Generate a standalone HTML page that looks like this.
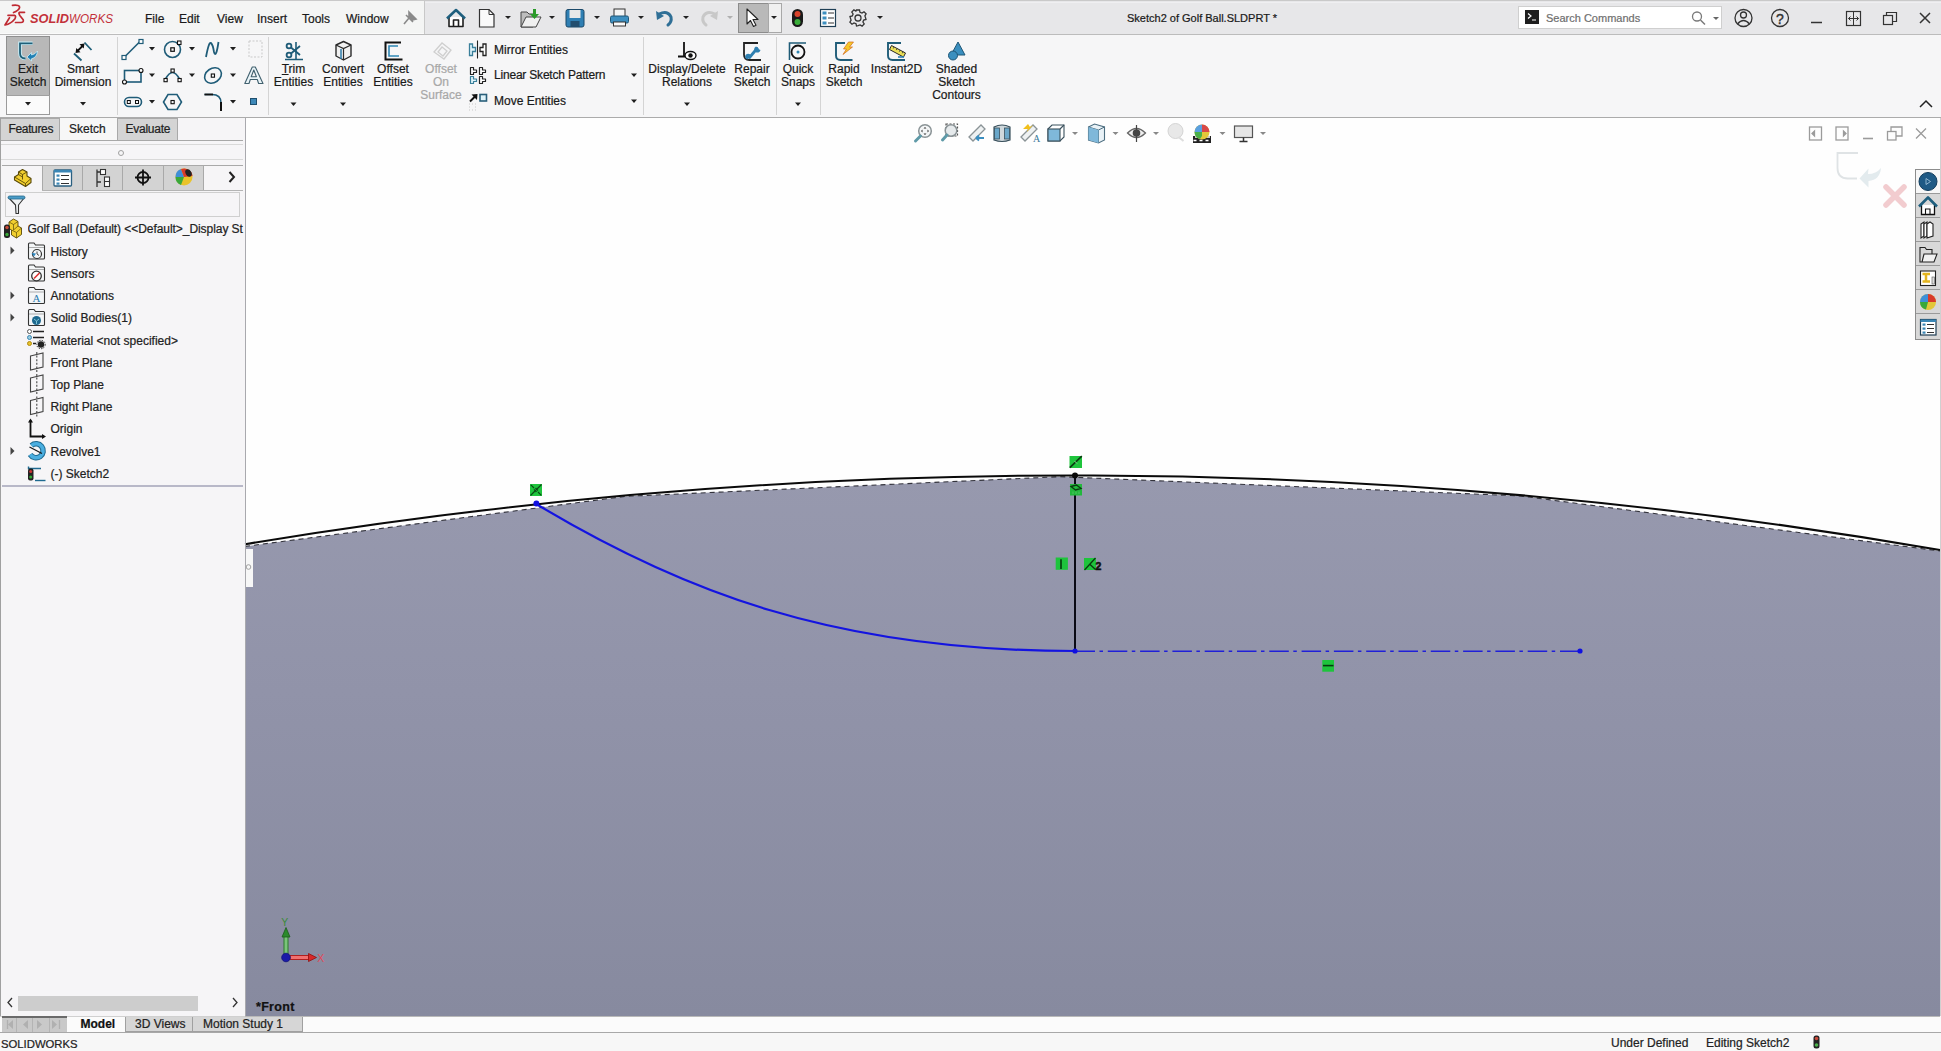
<!DOCTYPE html>
<html><head><meta charset="utf-8">
<style>
*{margin:0;padding:0;box-sizing:border-box}
html,body{width:1941px;height:1051px;overflow:hidden;background:#f4f4f4;font-family:"Liberation Sans",sans-serif;color:#1a1a1a}
.a{position:absolute}
.t{position:absolute;white-space:nowrap;font-size:12px;line-height:13px;-webkit-text-stroke:0.22px currentColor}
svg{position:absolute;overflow:visible}
.rl{position:absolute;top:63px;width:100px;margin-left:-50px;text-align:center;font-size:12px;line-height:13.2px;white-space:nowrap;color:#1a1a1a;-webkit-text-stroke:0.22px currentColor}
</style></head><body>
<!-- title bar -->
<div class="a" style="left:0;top:0;width:1941px;height:1px;background:#c9c9c9"></div>
<div class="a" style="left:0;top:1px;width:424px;height:33px;background:#f4f5f4"></div>
<div class="a" style="left:0;top:33px;width:424px;height:1px;background:#fafafa"></div>
<div class="a" style="left:424px;top:1px;width:1px;height:33px;background:#c8c8c8"></div>
<div class="a" style="left:425px;top:1px;width:1516px;height:33px;background:#e7e7e9"></div>
<div class="a" style="left:425px;top:2px;width:1516px;height:1px;background:#efeff1"></div>
<div class="a" style="left:0;top:34px;width:1941px;height:1px;background:#bcbcbc"></div>
<!-- title content -->
<svg class="a" style="left:0;top:0" width="1941" height="35">
<!-- 3DS logo -->
<g fill="none" stroke="#bf2a32" stroke-width="1.7" stroke-linecap="round" stroke-linejoin="round">
<path d="M12.5 5.3 Q20 4.5 19.6 7.5 Q18.8 10.5 13.5 12.5"/>
<path d="M8 15.3 L14.5 15.3 Q16.5 16 14.8 19 Q11 23.8 5 25 L9.5 17.8"/>
<path d="M24.5 12.3 L19.5 12.3 Q18.3 13 19.8 15.5 L23.2 19.8 Q24 22.5 21 22.5 L15.5 22.5"/>
</g>
<text x="30" y="23" font-family="Liberation Sans" font-size="12.5" font-weight="bold" font-style="italic" fill="#c3313a" textLength="39" lengthAdjust="spacingAndGlyphs">SOLID</text>
<text x="69" y="23" font-family="Liberation Sans" font-size="12.5" font-style="italic" fill="#c3313a" textLength="44" lengthAdjust="spacingAndGlyphs">WORKS</text>
<!-- pin -->
<path d="M404 24 L409 18 M406 15 L413 22 M409 12 L416 19 L412 20 L409 17 Z" stroke="#8a8a8a" stroke-width="1.6" fill="#8a8a8a"/>
<!-- home -->
<g stroke="#1e1e1e" stroke-width="1.6" fill="#fff" stroke-linejoin="round">
<path d="M449 17 L449 26.5 L463 26.5 L463 17" />
<path d="M453.5 26.5 L453.5 20 L458.5 20 L458.5 26.5" fill="none"/>
</g>
<path d="M447 18.5 L456 10 L465 18.5" stroke="#1e5f7e" stroke-width="2.6" fill="none" stroke-linejoin="round"/>
<!-- new doc -->
<path d="M479.5 9.5 L489 9.5 L494 14.5 L494 27 L479.5 27 Z" stroke="#333" stroke-width="1.2" fill="#fafafa"/>
<path d="M489 9.5 L489 14.5 L494 14.5" stroke="#333" stroke-width="1" fill="none"/>
<!-- open -->
<path d="M521 12 L527 12 L529 14 L533 14 L533 27 L521 27 Z" fill="#bdbdbd" stroke="#444" stroke-width="1"/>
<path d="M521 27 L526 17 L541 17 L536 27 Z" fill="#f0f0f0" stroke="#444" stroke-width="1"/>
<path d="M533 9 L536 9 L536 14 L539 14 L534.5 19 L530 14 L533 14 Z" fill="#2a9a2a"/>
<!-- save -->
<rect x="566" y="9.5" width="18" height="17.5" rx="2" fill="#2f7fb3" stroke="#1b4a6a" stroke-width="1"/>
<rect x="569.5" y="10" width="11" height="8" fill="#e8e8e8"/>
<rect x="570.5" y="21" width="9" height="6" fill="#234e6e"/>
<!-- print -->
<rect x="614" y="9" width="11" height="8" fill="#f5f5f5" stroke="#333" stroke-width="1"/>
<rect x="610.5" y="16" width="18" height="7" rx="1.5" fill="#3d8fc0" stroke="#1f5676" stroke-width="1"/>
<rect x="613.5" y="22" width="12" height="4" fill="#fafafa" stroke="#333" stroke-width="1"/>
<!-- undo -->
<path d="M659 14 Q668 10 671 17 Q672 22 668 25" stroke="#2f6f96" stroke-width="3" fill="none" stroke-linecap="round"/>
<path d="M656 11 L657 20 L664 16 Z" fill="#2f6f96"/>
<!-- redo (disabled) -->
<path d="M715 14 Q706 10 703 17 Q702 22 706 25" stroke="#c8c8c8" stroke-width="3" fill="none" stroke-linecap="round"/>
<path d="M718 11 L717 20 L710 16 Z" fill="#c8c8c8"/>
<!-- select box -->
<rect x="738.5" y="3.5" width="30" height="29" fill="#b9b9b9" stroke="#8c8c8c" stroke-width="1"/>
<rect x="768.5" y="3.5" width="13" height="29" fill="#f0f0f0" stroke="#a8a8a8" stroke-width="1"/>
<!-- dropdown arrows -->
<g fill="#222">
<path d="M505 16 L511 16 L508 19 Z"/><path d="M549 16 L555 16 L552 19 Z"/><path d="M594 16 L600 16 L597 19 Z"/><path d="M638 16 L644 16 L641 19 Z"/><path d="M683 16 L689 16 L686 19 Z"/><path d="M771 16 L777 16 L774 19 Z"/><path d="M877 16 L883 16 L880 19 Z"/>
</g>
<path d="M727 16 L733 16 L730 19 Z" fill="#b0b0b0"/>
<path d="M747 9 L747 24 L750.5 20.5 L753.5 26.5 L756 25.3 L753 19.5 L758 19.5 Z" fill="#fff" stroke="#222" stroke-width="1.1" stroke-linejoin="round"/>
<!-- traffic light -->
<rect x="792" y="9" width="11" height="18" rx="5.5" fill="#1a1a1a"/>
<circle cx="797.5" cy="14" r="3" fill="#d8432b"/><circle cx="797.5" cy="22" r="3" fill="#3aae3a"/>
<!-- list icon -->
<rect x="820.5" y="9.5" width="15" height="17" fill="#fff" stroke="#1f3f55" stroke-width="1.2"/>
<rect x="822.5" y="11.5" width="4" height="3" fill="#3d8fc0"/><rect x="822.5" y="16.5" width="4" height="3" fill="#3d8fc0"/><rect x="822.5" y="21.5" width="4" height="3" fill="#3d8fc0"/>
<path d="M828 13 H834 M828 18 H834 M828 23 H834" stroke="#333" stroke-width="1"/>
<!-- gear -->
<g transform="translate(858,18)" fill="none" stroke="#333" stroke-width="1.3">
<path d="M-1.5 -8 L1.5 -8 L2 -5.7 L4 -4.9 L6 -6.2 L8.1 -4.1 L6.9 -2.1 L7.6 -0.1 L8 1.5 L8 1.5 L5.7 2 L4.9 4 L6.2 6 L4.1 8.1 L2.1 6.9 L0.1 7.6 L-1.5 8 L-2 5.7 L-4 4.9 L-6 6.2 L-8.1 4.1 L-6.9 2.1 L-7.6 0.1 L-8 -1.5 L-5.7 -2 L-4.9 -4 L-6.2 -6 L-4.1 -8.1 L-2.1 -6.9 Z"/>
<circle r="3"/>
</g>
<!-- right side -->
<rect x="1518.5" y="6.5" width="203" height="22" fill="#fff" stroke="#cfcfcf" stroke-width="1"/>
<rect x="1525" y="10" width="14" height="14" fill="#1e1e1e"/>
<path d="M1528 13.5 L1531 16 L1528 18.5 M1532 20 H1536" stroke="#fff" stroke-width="1.2" fill="none"/>
<text x="1546" y="22" font-family="Liberation Sans" font-size="11" fill="#6e6e6e" stroke="#6e6e6e" stroke-width="0.2">Search Commands</text>
<circle cx="1697" cy="16.5" r="4.5" fill="none" stroke="#7a7a7a" stroke-width="1.3"/>
<path d="M1700.5 20 L1705 24.5" stroke="#7a7a7a" stroke-width="1.5"/>
<path d="M1713 17 L1719 17 L1716 20 Z" fill="#666"/>
<circle cx="1743.5" cy="18" r="8.5" fill="none" stroke="#333" stroke-width="1.3"/>
<circle cx="1743.5" cy="15" r="3" fill="none" stroke="#333" stroke-width="1.3"/>
<path d="M1737.5 24 Q1743.5 17 1749.5 24" fill="none" stroke="#333" stroke-width="1.3"/>
<circle cx="1780" cy="18" r="8.5" fill="none" stroke="#333" stroke-width="1.3"/>
<text x="1776" y="23.5" font-family="Liberation Sans" font-size="14" fill="#333" stroke="#333" stroke-width="0.4">?</text>
<path d="M1811 22.5 H1822" stroke="#333" stroke-width="1.5"/>
<rect x="1846.5" y="11.5" width="14" height="14" fill="none" stroke="#333" stroke-width="1.2"/>
<path d="M1853.5 12 V25 M1848.5 18.5 H1858.5 M1850.5 16.5 L1848.5 18.5 L1850.5 20.5 M1856.5 16.5 L1858.5 18.5 L1856.5 20.5" stroke="#333" stroke-width="1" fill="none"/>
<rect x="1883.5" y="15.5" width="9" height="9" fill="none" stroke="#333" stroke-width="1.2"/>
<path d="M1886.5 15.5 V12.5 H1896.5 V21.5 H1892.5" fill="none" stroke="#333" stroke-width="1.2"/>
<path d="M1920 13 L1930 23 M1930 13 L1920 23" stroke="#333" stroke-width="1.5"/>
</svg>
<div class="t" style="left:145px;top:13px;">File</div>
<div class="t" style="left:179px;top:13px;">Edit</div>
<div class="t" style="left:217px;top:13px;">View</div>
<div class="t" style="left:257px;top:13px;">Insert</div>
<div class="t" style="left:302px;top:13px;">Tools</div>
<div class="t" style="left:346px;top:13px;">Window</div>
<div class="t" style="left:1127px;top:12px;font-size:11px">Sketch2 of Golf Ball.SLDPRT *</div>
<!-- ribbon -->
<div class="a" style="left:0;top:35px;width:1941px;height:82px;background:#f6f6f7"></div>
<div class="a" style="left:0;top:117px;width:1941px;height:1px;background:#ababab"></div>
<!-- ribbon content -->
<div class="a" style="left:6px;top:36px;width:44px;height:59px;background:#b8b8b8;border:1px solid #8f8f8f;border-bottom:none"></div>
<div class="a" style="left:6px;top:95px;width:44px;height:20px;background:#fbfbfb;border:1px solid #9a9a9a;border-top:1px solid #a0a0a0"></div>
<div class="a" style="left:117px;top:37px;width:1px;height:78px;background:#d4d4d4"></div>
<div class="a" style="left:268px;top:37px;width:1px;height:78px;background:#d4d4d4"></div>
<div class="a" style="left:643px;top:37px;width:1px;height:78px;background:#d4d4d4"></div>
<div class="a" style="left:776px;top:37px;width:1px;height:78px;background:#d4d4d4"></div>
<div class="a" style="left:820px;top:37px;width:1px;height:78px;background:#d4d4d4"></div>
<div class="rl" style="left:28px;">Exit<br>Sketch</div>
<div class="rl" style="left:83px;">Smart<br>Dimension</div>
<div class="rl" style="left:293.5px;"><u style="text-decoration-thickness:1px;text-underline-offset:1px">T</u>rim<br>Entities</div>
<div class="rl" style="left:343px;">Convert<br>Entities</div>
<div class="rl" style="left:393px;">Offset<br>Entities</div>
<div class="rl" style="left:441px;color:#a8a8a8">Offset<br>On<br>Surface</div>
<div class="rl" style="left:687px;">Display/Delete<br>Relations</div>
<div class="rl" style="left:752px;">Repair<br>Sketch</div>
<div class="rl" style="left:798px;">Quick<br>Snaps</div>
<div class="rl" style="left:844px;">Rapid<br>Sketch</div>
<div class="rl" style="left:896.5px;">Instant2D</div>
<div class="rl" style="left:956.5px;">Shaded<br>Sketch<br>Contours</div>
<div class="t" style="left:494px;top:43.5px">Mirror Entities</div>
<div class="t" style="left:494px;top:69px;letter-spacing:-0.2px">Linear Sketch Pattern</div>
<div class="t" style="left:494px;top:95px">Move Entities</div>
<svg class="a" style="left:0;top:0" width="1941" height="118">
<g fill="#1e1e1e">
<path d="M25 102 L31 102 L28 105.5 Z"/><path d="M80 102 L86 102 L83 105.5 Z"/>
<path d="M149 47 L155 47 L152 50.5 Z"/><path d="M189 47 L195 47 L192 50.5 Z"/><path d="M230 47 L236 47 L233 50.5 Z"/>
<path d="M149 73.5 L155 73.5 L152 77 Z"/><path d="M189 73.5 L195 73.5 L192 77 Z"/><path d="M230 73.5 L236 73.5 L233 77 Z"/>
<path d="M149 100 L155 100 L152 103.5 Z"/><path d="M230 100 L236 100 L233 103.5 Z"/>
<path d="M290.5 102.5 L296.5 102.5 L293.5 106 Z"/><path d="M340 102.5 L346 102.5 L343 106 Z"/>
<path d="M631 73.5 L637 73.5 L634 77 Z"/><path d="M631 99.5 L637 99.5 L634 103 Z"/>
<path d="M684 102.5 L690 102.5 L687 106 Z"/><path d="M795 102.5 L801 102.5 L798 106 Z"/>
</g>
<path d="M1920 107 L1926 101 L1932 107" fill="none" stroke="#222" stroke-width="1.5"/>
<!-- exit sketch icon -->
<path d="M32.5 43.3 H20 V53 Q20 58.5 25.5 58.5" stroke="#c8eef8" stroke-width="3.6" fill="none"/>
<path d="M32.5 43.3 H20 V53 Q20 58.5 25.5 58.5" stroke="#1f5f78" stroke-width="1.8" fill="none"/>
<path d="M27 57 L31.5 52.5 L31.5 55 Q35 54.5 37.5 51 Q37 57.5 31.5 58.8 L31.5 61 Z" fill="#1f7fb4" stroke="#c8eef8" stroke-width="0.8"/>
<!-- smart dimension icon -->
<path d="M74 53.5 L81.5 60.5 M84.5 42.5 L91.5 50" stroke="#1f5f78" stroke-width="1.8"/>
<path d="M77.5 51 L83 45.5" stroke="#111" stroke-width="1.8"/>
<path d="M75.5 53 L76.3 48 L80.5 52.2 Z M84.5 43.5 L79.5 44.3 L83.7 48.5 Z" fill="#111"/>
<!-- line -->
<g fill="none" stroke="#1f5c78" stroke-width="1.6">
<path d="M124.5 57 L140 41.5"/><rect x="122" y="55.5" width="4" height="4" fill="#fff" stroke-width="1.2"/><rect x="139" y="39.5" width="4" height="4" fill="#fff" stroke-width="1.2"/>
<circle cx="172.5" cy="49.5" r="8"/><rect x="170.8" y="47.8" width="3.5" height="3.5" stroke="#111" stroke-width="1.2"/><rect x="177.5" y="41" width="3.5" height="3.5" fill="#fff" stroke="#111" stroke-width="1.1"/>
<path d="M206 57 Q209 41 211 43 Q213 45 214 52 Q216 59 218.5 42" stroke-width="1.8"/>
<rect x="124.5" y="70.5" width="16.5" height="11.5"/><circle cx="141" cy="70.5" r="2" fill="#fff" stroke="#111" stroke-width="1.1"/><circle cx="124.5" cy="82" r="2" fill="#fff" stroke="#111" stroke-width="1.1"/>
<path d="M165.5 79 Q172.5 66 179.5 79"/><rect x="164" y="78.5" width="3.2" height="3.2" fill="#fff" stroke="#111" stroke-width="1.1"/><rect x="178" y="78.5" width="3.2" height="3.2" fill="#fff" stroke="#111" stroke-width="1.1"/><rect x="171" y="69" width="3.2" height="3.2" fill="#fff" stroke="#111" stroke-width="1.1"/>
<ellipse cx="213" cy="75.5" rx="9" ry="7" transform="rotate(-35 213 75.5)"/><rect x="211.3" y="74" width="3.2" height="3.2" stroke="#111" stroke-width="1.1"/>
<rect x="124.5" y="97.5" width="17" height="9" rx="4.5"/><rect x="127.3" y="100.5" width="3" height="3" stroke="#111" stroke-width="1"/><rect x="135.5" y="100.5" width="3" height="3" stroke="#111" stroke-width="1"/>
<path d="M168 94.5 L177 94.5 L181.5 102 L177 109.5 L168 109.5 L163.5 102 Z"/><rect x="171" y="100.5" width="3.2" height="3.2" stroke="#111" stroke-width="1.1"/>
<path d="M204.5 94.5 L212 94.5 Q221 94.5 221 103" />
</g>
<path d="M221 102 L221 111" stroke="#111" stroke-width="2"/>
<path d="M204.5 94.5 L213 94.5" stroke="#111" stroke-width="1.8"/>
<rect x="249" y="41" width="13" height="16" fill="none" stroke="#c9c9c9" stroke-width="1" stroke-dasharray="2 1.5"/>
<path d="M244.8 83.5 L249 83.5 L250.3 79.5 L257.3 79.5 L258.6 83.5 L263 83.5 L255.3 67 L252.3 67 Z M251.2 76.8 L253.8 70 L256.4 76.8 Z" fill="#eaf4f8" fill-rule="evenodd" stroke="#40606e" stroke-width="1.1" stroke-linejoin="round"/>
<rect x="250.5" y="98.5" width="6" height="6" fill="#3d88b8" stroke="#1f4f6e" stroke-width="1"/>
<!-- trim -->
<g fill="none" stroke="#1f5c78" stroke-width="1.8">
<circle cx="289" cy="46" r="2.4"/><circle cx="289" cy="55" r="2.4"/>
<path d="M291 47.5 L300 55 M291 53.5 L300 46"/>
</g>
<path d="M296 42 L296 60 M285 59.5 L303 59.5" stroke="#1f5c78" stroke-width="1.6"/>
<!-- convert cube -->
<path d="M336 45 L343.5 41.5 L351 45 L351 56 L343.5 60 L336 56 Z" fill="#f1f1f1" stroke="#2a2a2a" stroke-width="1.4" stroke-linejoin="round"/>
<path d="M336 45 L343.5 48.5 L351 45 M343.5 48.5 L343.5 60" fill="none" stroke="#2a2a2a" stroke-width="1.2"/>
<path d="M341 49 L341 59" stroke="#2b7aa8" stroke-width="1.5"/>
<!-- offset -->
<path d="M401 42.5 L385.5 42.5 L385.5 59.5 L402.5 59.5" fill="none" stroke="#111" stroke-width="2"/>
<path d="M398 46 L389 46 L389 56 L399 56" fill="none" stroke="#2e86b4" stroke-width="1.6"/>
<!-- offset on surface disabled -->
<path d="M434 52 L442 43 L451 50 L444 59 Z M438 52 L442 47 L447 51 L443 56 Z" fill="none" stroke="#cfcfcf" stroke-width="1.3"/>
<!-- mirror / linear / move -->
<path d="M469.5 44 H472.5 V47.5 H475.5 V51.5 H472.5 V55.5 H469.5 Z" fill="#dff3f9" stroke="#3a7f9a" stroke-width="1.3"/>
<path d="M486 44 H483 V47.5 H480 V51.5 H483 V55.5 H486 Z" fill="#fff" stroke="#222" stroke-width="1.3"/>
<path d="M477.5 40.5 V58.5" stroke="#222" stroke-width="1.1"/>
<path d="M470.5 67.5 H473.5 V70.0 H476.5 V72.5 H473.5 V74.5 H470.5 Z" fill="#fff" stroke="#222" stroke-width="1.2" stroke-linejoin="round"/><path d="M479.5 67.5 H482.5 V70.0 H485.5 V72.5 H482.5 V74.5 H479.5 Z" fill="#fff" stroke="#222" stroke-width="1.2" stroke-linejoin="round"/><path d="M470.5 76.5 H473.5 V79.0 H476.5 V81.5 H473.5 V83.5 H470.5 Z" fill="#dff3f9" stroke="#3a7f9a" stroke-width="1.2" stroke-linejoin="round"/><path d="M479.5 76.5 H482.5 V79.0 H485.5 V81.5 H482.5 V83.5 H479.5 Z" fill="#fff" stroke="#222" stroke-width="1.2" stroke-linejoin="round"/>
<path d="M470 101.5 L476 95.5" stroke="#111" stroke-width="2"/>
<path d="M477.5 94 L471.5 94.5 L477 100 Z" fill="#111"/>
<rect x="480" y="94.5" width="6.5" height="6.5" fill="#dff3f9" stroke="#2a5f7a" stroke-width="1.6"/>
<g fill="#c8c8c8"><rect x="469" y="103.5" width="1" height="1"/><rect x="472" y="103.5" width="1" height="1"/><rect x="475" y="103.5" width="1" height="1"/><rect x="469" y="106.5" width="1" height="1"/><rect x="475" y="106.5" width="1" height="1"/><rect x="469" y="109.5" width="1" height="1"/><rect x="472" y="109.5" width="1" height="1"/><rect x="475" y="109.5" width="1" height="1"/></g>
<!-- display delete -->
<path d="M684 42 L684 56 M678 56.5 L690 56.5" stroke="#111" stroke-width="1.8"/>
<ellipse cx="690.5" cy="55.5" rx="5.5" ry="4" fill="#fff" stroke="#111" stroke-width="1.4"/>
<circle cx="690.5" cy="55.5" r="2.2" fill="#111"/>
<!-- repair -->
<path d="M758 43 H744 V54.5 Q744 60 749.5 60 H761" fill="none" stroke="#222" stroke-width="1.8"/>
<path d="M749.5 57.5 L757 48.5" stroke="#2e7fb0" stroke-width="2.8" stroke-linecap="round"/>
<path d="M756 46.5 A3.2 3.2 0 1 0 760.5 50 L758.8 49.2 L757.8 47.5 Z" fill="#2e7fb0"/>
<path d="M751 56 A3 3 0 1 0 747.2 59.5 L748.8 58.2 L749.8 56.8 Z" fill="#2e7fb0"/>
<!-- quick snaps -->
<path d="M789.5 60 L789.5 43 L806 43" fill="none" stroke="#1f5c78" stroke-width="1.6"/>
<circle cx="798" cy="52" r="6.5" fill="none" stroke="#111" stroke-width="1.8"/>
<circle cx="798" cy="52" r="1.5" fill="#2e86b4"/>
<!-- rapid sketch -->
<path d="M852.5 60 H840.5 Q836 60 836 55.5 V43 H845" fill="none" stroke="#1f5c78" stroke-width="1.9"/>
<path d="M848.5 42 L853.5 42 L849.5 47 L852.5 47 L843 54.5 L846.5 49 L843.5 49 Z" fill="#f4c82a" stroke="#d2691a" stroke-width="0.7" stroke-linejoin="round"/>
<!-- instant2D -->
<path d="M905 60 H892.5 Q888 60 888 55.5 V43 H901" fill="none" stroke="#1f5c78" stroke-width="1.9"/>
<path d="M891.5 45.5 L905.5 53 L903.5 57 L889.5 49.5 Z" fill="#ece058" stroke="#2a2a2a" stroke-width="1"/>
<path d="M894 47 L893.3 48.5 M897 48.6 L896.3 50.1 M900 50.2 L899.3 51.7 M903 51.8 L902.3 53.3" stroke="#2a2a2a" stroke-width="0.8"/>
<path d="M898 57 L904 57" stroke="#2e7fb0" stroke-width="1.6"/>
<!-- shaded contours -->
<path d="M958 42 L965 55 L951 55 Z" fill="#3a8fbf" stroke="#1f5676" stroke-width="1"/>
<circle cx="953" cy="55.5" r="4.5" fill="#3a8fbf" stroke="#1f5676" stroke-width="1"/>
</svg>
<!-- left panel -->
<div class="a" style="left:0;top:118px;width:245px;height:898px;background:#f6f5f7"></div>
<!-- viewport -->
<!--VP-->
<div class="a" style="left:245px;top:118px;width:1696px;height:899px;background:#fefefe"></div>
<!-- viewport content -->
<svg class="a" style="left:0;top:0" width="1941" height="1051">
<defs>
<linearGradient id="bodyg" x1="0" y1="475" x2="0" y2="1016" gradientUnits="userSpaceOnUse">
<stop offset="0" stop-color="#9799ae"/><stop offset="0.4" stop-color="#9193a9"/><stop offset="1" stop-color="#878a9f"/>
</linearGradient>
</defs>
<path d="M245.0 546.4 L625.0 496.4 L1060.0 476.7 L1520.0 495.9 L1940.0 551.0 L1940 1017 L245 1017 Z" fill="url(#bodyg)"/>
<path d="M245.0 546.4 L625.0 496.4 L1060.0 476.7 L1520.0 495.9 L1940.0 551.0" fill="none" stroke="#33333c" stroke-width="1.1" stroke-dasharray="5 4"/>
<path d="M245 544.2 A5050 5050 0 0 1 1940 550.1" fill="none" stroke="#0a0a0a" stroke-width="2"/>
<path d="M536.2 504 C679.4 590 832.6 651 1075 651" fill="none" stroke="#1414e0" stroke-width="2.2"/>
<line x1="1075" y1="476" x2="1075" y2="651" stroke="#0a0a14" stroke-width="2"/>
<line x1="1075.5" y1="651.3" x2="1580" y2="651.3" stroke="#2020d8" stroke-width="1.6" stroke-dasharray="19.5 4.5 3.5 4.8"/>
<circle cx="536.4" cy="503.6" r="3" fill="#1010e0"/>
<circle cx="1075" cy="475.5" r="3" fill="#0a0a0a"/>
<circle cx="1075" cy="651" r="2.6" fill="#1010e0"/>
<circle cx="1580" cy="651" r="2.6" fill="#1010e0"/>
</svg>
<!-- viewport overlay -->
<svg class="a" style="left:0;top:0" width="1941" height="1051">
<!-- heads-up toolbar -->
<g transform="translate(923.5,133)">
<circle cx="1.5" cy="-2" r="6.3" fill="#f4f6f7" stroke="#8a9396" stroke-width="1.5"/>
<path d="M-3 3 L-8 8" stroke="#5f9aa8" stroke-width="3" stroke-linecap="round"/>
<path d="M1.5 -6 L0 -4.5 L3 -4.5 Z M1.5 2 L0 0.5 L3 0.5 Z M-2.5 -2 L-1 -3.5 L-1 -0.5 Z M5.5 -2 L4 -3.5 L4 -0.5 Z" fill="#333"/>
</g>
<g transform="translate(950,133)">
<rect x="-4" y="-9" width="11.5" height="12" fill="none" stroke="#555" stroke-width="1.2" stroke-dasharray="2 1.5"/>
<circle cx="1" cy="-2.5" r="5.8" fill="#e6eaec" stroke="#8a9396" stroke-width="1.5"/>
<path d="M-3 2 L-7.5 7" stroke="#5f9aa8" stroke-width="3" stroke-linecap="round"/>
</g>
<g transform="translate(977,133)">
<path d="M-8 4 L4 -8 L8 -4 L-4 8 Z" fill="#eef1f2" stroke="#8a9396" stroke-width="1.3"/>
<path d="M-1 5 L7 5 M-1 5 L2 2.5 M-1 5 L2 7.5" stroke="#3a8ec0" stroke-width="1.8" fill="none"/>
</g>
<g transform="translate(1002,133)">
<path d="M-8 -6 Q0 -10 8 -6 L8 7 Q0 10 -8 7 Z" fill="#cfd8dc" stroke="#39505c" stroke-width="1.2"/>
<rect x="-7.5" y="-5" width="5" height="11" fill="#6aa7c9" stroke="#39505c" stroke-width="0.8"/>
<rect x="2.5" y="-5" width="5" height="11" fill="#6aa7c9" stroke="#39505c" stroke-width="0.8"/>
</g>
<g transform="translate(1029,133)">
<path d="M-8 4 L4 -8 L8 -4 L-4 8 Z" fill="#eef1f2" stroke="#8a9396" stroke-width="1.3"/>
<path d="M-6 -4 L-1 -9 L1 -6 L4 -8 L-2 -1 L-1 -4 Z" fill="#f2c01b"/>
<text x="4" y="9" font-family="Liberation Serif" font-size="10" fill="#3a7a9a">A</text>
</g>
<g transform="translate(1056,133)">
<path d="M-8 -4 L-4 -8 L8 -8 L8 4 L4 8 L-8 8 Z" fill="#fff" stroke="#39505c" stroke-width="1.1"/>
<rect x="-8" y="-4" width="12" height="12" fill="#7fb8da" stroke="#39505c" stroke-width="1.1"/>
<path d="M4 -4 L8 -8" stroke="#39505c" stroke-width="1.1"/>
</g>
<g transform="translate(1096.5,133)">
<path d="M-8 -6 L-2 -9 L8 -6 L8 7 L2 10 L-8 7 Z" fill="#e9f2f7" stroke="#4d6e80" stroke-width="1.1"/>
<path d="M-8 -6 L2 -3 L8 -6 M2 -3 L2 10" fill="none" stroke="#4d6e80" stroke-width="1"/>
<path d="M-8 -6 L2 -3 L2 10 L-8 7 Z" fill="#7fb8da"/>
</g>
<g transform="translate(1136.5,133)">
<path d="M-9 0 Q0 -9 9 0 Q0 9 -9 0 Z" fill="#eee" stroke="#666" stroke-width="1.3"/>
<circle r="3.8" fill="#444"/>
<path d="M0 -8 V9" stroke="#444" stroke-width="1.2"/>
</g>
<g transform="translate(1176.5,133)">
<circle cx="-1" cy="-2" r="7.5" fill="#e8e8e8" stroke="#d4d4d4" stroke-width="1"/>
<path d="M2 4 L7 8" stroke="#ddd" stroke-width="2"/>
</g>
<g transform="translate(1202,133)">
<rect x="-9" y="3" width="18" height="7" fill="#222"/>
<path d="M-7 4 H-4 M-1 4 H2 M5 4 H8 M-8.5 7.5 H-5.5 M-2.5 7.5 H0.5 M3.5 7.5 H6.5" stroke="#fff" stroke-width="1.5"/>
<circle cx="0" cy="-1" r="7.5" fill="#e3c73a"/>
<path d="M0 -1 L-7.5 -1 A7.5 7.5 0 0 1 0 -8.5 Z" fill="#5aa0e0"/>
<path d="M0 -1 L0 -8.5 A7.5 7.5 0 0 1 7.5 -1 Z" fill="#d84848"/>
<path d="M0 -1 L-7.5 -1 A7.5 7.5 0 0 0 -2 6 L0 3 Z" fill="#4ab04a"/>
</g>
<g transform="translate(1243.5,133)">
<rect x="-9" y="-7" width="18" height="11.5" fill="#e6e6e6" stroke="#555" stroke-width="1.2"/>
<path d="M0 4.5 V8 M-4 8.5 H4" stroke="#333" stroke-width="1.5"/>
</g>
<g fill="#888">
<path d="M1072 132 L1078 132 L1075 135 Z"/><path d="M1112.5 132 L1118.5 132 L1115.5 135 Z"/><path d="M1153 132 L1159 132 L1156 135 Z"/><path d="M1219.5 132 L1225.5 132 L1222.5 135 Z"/><path d="M1260 132 L1266 132 L1263 135 Z"/>
</g>
<!-- window controls -->
<g fill="none" stroke="#9b9b9b" stroke-width="1.3">
<rect x="1809.5" y="127" width="12" height="13"/><path d="M1812 133.5 L1814.5 131 L1814.5 136 Z" fill="#9b9b9b"/>
<rect x="1836" y="127" width="12" height="13"/><path d="M1846 133.5 L1843.5 131 L1843.5 136 Z" fill="#9b9b9b"/>
<path d="M1863 138.5 H1873" stroke-width="1.6"/>
<rect x="1887.5" y="131.5" width="8.5" height="8.5"/><path d="M1891 131.5 V127 H1902 V136 H1896"/>
<path d="M1916 128.5 L1926 138.5 M1926 128.5 L1916 138.5"/>
</g>
<!-- confirm corner -->
<path d="M1858 153 L1837.5 153 L1837.5 168 Q1837.5 178.5 1848 178.5 L1857 178.5" fill="none" stroke="#dfe3e5" stroke-width="1.8"/>
<path d="M1859.5 178.5 L1868.5 168.5 L1868 174 Q1876 174 1881 168 Q1880 180 1868.5 181 L1868.5 187.5 Z" fill="#e3ebee"/>
<path d="M1886 187 L1904 205 M1904 187 L1886 205" stroke="#f2cccf" stroke-width="5.5" stroke-linecap="round"/>
<!-- task pane -->
<rect x="1915.5" y="169.5" width="26" height="170" fill="#d8d8d8" stroke="#8c8c8c" stroke-width="1"/>
<rect x="1916" y="170" width="25" height="23.5" fill="#f7f7f7"/>
<g stroke="#9a9a9a" stroke-width="1"><path d="M1916 193.5 H1941 M1916 217.5 H1941 M1916 241.5 H1941 M1916 265.5 H1941 M1916 289.5 H1941 M1916 313.5 H1941"/></g>
<circle cx="1928" cy="181.5" r="9" fill="#1f5a85"/><circle cx="1928" cy="181.5" r="9" fill="none" stroke="#0f3a5a" stroke-width="1"/>
<path d="M1926 178.5 L1930.5 181.5 L1926 184.5 Z" fill="none" stroke="#a9c9e0" stroke-width="0.8"/>
<path d="M1921.5 205 V214.5 H1934.5 V205" fill="#fff" stroke="#111" stroke-width="1.3"/>
<path d="M1925.5 214.5 V209 H1930 V214.5" fill="none" stroke="#111" stroke-width="1.1"/>
<path d="M1919 206.5 L1928 197.5 L1937 206.5" fill="none" stroke="#1f5f7e" stroke-width="2.6" stroke-linejoin="round"/>
<g fill="#fff" stroke="#222" stroke-width="1.1"><path d="M1921 224 L1924 222 L1924 236 L1921 238 Z"/><path d="M1924 224 L1927 222 L1927 236 L1924 238 Z"/><path d="M1927 224 L1930 222 L1933 224 L1933 236 L1927 238 Z"/></g>
<path d="M1920 251 L1920 262 L1934 262 L1937 254 L1924 254 L1922 262" fill="#f2f2f2" stroke="#222" stroke-width="1.1"/>
<path d="M1920 251 L1920 247.5 L1925 247.5 L1926.5 249.5 L1932 249.5 L1932 254" fill="none" stroke="#222" stroke-width="1.1"/>
<rect x="1920.5" y="271" width="15" height="14.5" fill="#fff" stroke="#222" stroke-width="1.1"/>
<path d="M1922.5 274 H1930 M1926 274 V281 M1922.5 281.5 H1930" stroke="#e3b520" stroke-width="2.5"/>
<rect x="1932" y="277" width="2.5" height="7" fill="#ddd" stroke="#555" stroke-width="0.6"/>
<circle cx="1928" cy="302" r="8" fill="#e3c73a"/>
<path d="M1928 302 L1920 302 A8 8 0 0 1 1928 294 Z" fill="#3f8fd8"/>
<path d="M1928 302 L1928 294 A8 8 0 0 1 1936 302 Z" fill="#d83a2a"/>
<path d="M1928 302 L1920 302 A8 8 0 0 0 1926 309.5 Z" fill="#3aa83a"/>
<rect x="1920.5" y="319.5" width="15.5" height="15.5" fill="#fff" stroke="#1f3f55" stroke-width="1.2"/>
<rect x="1920.5" y="319.5" width="15.5" height="2.5" fill="#3a86b5"/>
<g fill="#3a86b5"><rect x="1922.5" y="323.5" width="3" height="2.2"/><rect x="1922.5" y="327.5" width="3" height="2.2"/><rect x="1922.5" y="331.5" width="3" height="2.2"/></g>
<path d="M1927 324.5 H1934 M1927 328.5 H1934 M1927 332.5 H1934" stroke="#333" stroke-width="1"/>
<!-- constraints -->
<g>
<rect x="530" y="484" width="12" height="12" fill="#1ec43c"/>
<path d="M530.5 495.5 L541.5 484.5 M530.8 484.8 L534 488 M538 492 L541.3 495.3" stroke="#0a4a14" stroke-width="1.2"/>
<rect x="534.5" y="488.5" width="3" height="3" fill="none" stroke="#0a4a14" stroke-width="0.8" transform="rotate(45 536 490)"/>
<rect x="1069.5" y="456" width="12.5" height="12" fill="#1ec43c"/>
<path d="M1069.8 467.7 L1081.8 456.2" stroke="#0a3a10" stroke-width="1.6"/>
<path d="M1074.5 461 L1077 463.5" stroke="#8ee09a" stroke-width="1"/>
<rect x="1070" y="484" width="12" height="11.5" fill="#22b83c"/>
<path d="M1071 486.5 L1076.5 485 L1081 488.5 L1075.5 490 Z" fill="none" stroke="#0a3a10" stroke-width="1.3"/>
<path d="M1073 491.5 V494 M1076 491.5 V494 M1079 491.5 V494" stroke="#5ac86a" stroke-width="0.8"/>
<rect x="1055.7" y="557.5" width="12.2" height="12.3" fill="#1ec43c"/>
<path d="M1061 559.2 V569" stroke="#074a10" stroke-width="1.8"/>
<rect x="1084" y="558" width="12" height="12" fill="#1ec43c"/>
<path d="M1084.5 570 L1095.5 558 M1089.5 564 L1095.5 569.5" stroke="#0a3a10" stroke-width="1.3"/>
<text x="1095.5" y="570" font-family="Liberation Sans" font-size="10.5" font-weight="bold" fill="#111" stroke="#111" stroke-width="0.6">2</text>
<rect x="1322.3" y="660" width="11.7" height="11.7" fill="#1ec43c"/>
<path d="M1323 665.6 H1333.5" stroke="#073a10" stroke-width="1.6"/>
</g>
<!-- triad -->
<rect x="284" y="936" width="4" height="20" fill="#7ac47a" stroke="#2a7a2a" stroke-width="1"/>
<path d="M282 937 L286 927.5 L290 937 Z" fill="#2a8a2a" stroke="#1a5a1a" stroke-width="0.8"/>
<rect x="290" y="955.5" width="19" height="4" fill="#f07070" stroke="#b02020" stroke-width="1"/>
<path d="M308.5 953.5 L316.5 957.5 L308.5 961.5 Z" fill="#d82828" stroke="#901010" stroke-width="0.8"/>
<circle cx="286" cy="957.5" r="4.3" fill="#1a1aa8" stroke="#10107a" stroke-width="0.8"/>
<text x="281.3" y="925.5" font-family="Liberation Sans" font-size="10.5" fill="#3a8a3a">Y</text>
<text x="317.2" y="962" font-family="Liberation Sans" font-size="10.5" fill="#e04a5a">X</text>
<!-- splitter handle -->
<rect x="245" y="549" width="8" height="38" fill="#f7f7f7"/>
<circle cx="248.5" cy="567" r="2.3" fill="none" stroke="#999" stroke-width="0.9"/>
</svg>
<div class="t" style="left:256px;top:1001px;font-weight:bold;color:#111;font-size:12.5px;letter-spacing:0.3px">*Front</div>
<!-- left panel content -->
<div class="a" style="left:0;top:118px;width:60px;height:22px;background:#d4d4d4;border:1px solid #a9a9a9;border-left:none;border-bottom:none"></div>
<div class="a" style="left:60px;top:118px;width:57px;height:22px;background:#f7f7f7"></div>
<div class="a" style="left:117px;top:118px;width:61px;height:22px;background:#d4d4d4;border:1px solid #a9a9a9;border-bottom:none"></div>
<div class="t" style="left:8.5px;top:123px;color:#222;letter-spacing:-0.35px">Features</div>
<div class="t" style="left:69px;top:123px;color:#222">Sketch</div>
<div class="t" style="left:125.5px;top:123px;color:#222;letter-spacing:-0.25px">Evaluate</div>
<div class="a" style="left:0;top:140px;width:243px;height:1px;background:#a8a8a8"></div>
<div class="a" style="left:0;top:144px;width:243px;height:1px;background:#d9d9d9"></div>
<div class="a" style="left:0;top:159px;width:243px;height:1px;background:#d9d9d9"></div>
<div class="a" style="left:118px;top:150px;width:6px;height:6px;border:1px solid #a0a0a0;border-radius:50%"></div>
<div class="a" style="left:2px;top:165px;width:241px;height:1px;background:#a9a9a9"></div>
<div class="a" style="left:42px;top:165px;width:162px;height:25px;background:#d3d3d3;border:1px solid #a9a9a9;border-bottom:none"></div>
<div class="a" style="left:82px;top:166px;width:1px;height:24px;background:#a9a9a9"></div>
<div class="a" style="left:122px;top:166px;width:1px;height:24px;background:#a9a9a9"></div>
<div class="a" style="left:163px;top:166px;width:1px;height:24px;background:#a9a9a9"></div>
<div class="a" style="left:42px;top:190px;width:201px;height:1px;background:#b4b4b4"></div>
<div class="a" style="left:5px;top:192px;width:235px;height:25px;background:#f6f5f7;border:1px solid #cfcfcf"></div>
<div class="a" style="left:0;top:118px;width:1px;height:898px;background:#a0a0a0"></div>
<div class="a" style="left:245px;top:118px;width:1px;height:899px;background:#a9a9ae"></div>
<div class="a" style="left:2px;top:485px;width:241px;height:2px;background:#b8b8c8"></div>
<div class="t" style="left:27.5px;top:223px;color:#222;width:216.5px;overflow:hidden;letter-spacing:-0.06px">Golf Ball (Default) &lt;&lt;Default&gt;_Display St</div>
<div class="t" style="left:50.5px;top:245.7px;color:#222">History</div>
<div class="t" style="left:50.5px;top:267.9px;color:#222">Sensors</div>
<div class="t" style="left:50.5px;top:290.1px;color:#222">Annotations</div>
<div class="t" style="left:50.5px;top:312.3px;color:#222">Solid Bodies(1)</div>
<div class="t" style="left:50.5px;top:334.5px;color:#222">Material &lt;not specified&gt;</div>
<div class="t" style="left:50.5px;top:356.7px;color:#222">Front Plane</div>
<div class="t" style="left:50.5px;top:378.9px;color:#222">Top Plane</div>
<div class="t" style="left:50.5px;top:401.1px;color:#222">Right Plane</div>
<div class="t" style="left:50.5px;top:423.3px;color:#222">Origin</div>
<div class="t" style="left:50.5px;top:445.5px;color:#222">Revolve1</div>
<div class="t" style="left:50.5px;top:467.7px;color:#222">(-) Sketch2</div>
<svg class="a" style="left:0;top:0" width="245" height="500">
<path d="M14.5 177 L18.5 174.5 L18.5 172 L22.5 169.5 L27 172 L27 176 L31 178.5 L31 182.5 L25.5 186.5 L14.5 180 Z" fill="#f2cf2e" stroke="#5a4a08" stroke-width="1.1" stroke-linejoin="round"/>
<path d="M14.5 177 L25.5 183.5 L31 178.5 M25.5 183.5 V186.5 M18.5 172 L22.5 174.5 L27 172 M22.5 174.5 V179.5 M18.5 174.5 L22.5 177" fill="none" stroke="#5a4a08" stroke-width="0.9"/>
<rect x="54" y="170" width="17.5" height="16" rx="1" fill="#fff" stroke="#2a5f80" stroke-width="1.3"/>
<rect x="54" y="170" width="17.5" height="2.5" fill="#3a86b5"/>
<g fill="#3a86b5"><rect x="56.5" y="174.5" width="3" height="2.2"/><rect x="56.5" y="178.5" width="3" height="2.2"/><rect x="56.5" y="182.5" width="3" height="2.2"/></g>
<path d="M61 175.5 H69 M61 179.5 H69 M61 183.5 H69" stroke="#333" stroke-width="1"/>
<path d="M97 169.5 V187 M97 172 H101 M97 182 H101" fill="none" stroke="#333" stroke-width="1.3"/>
<rect x="100.5" y="169.5" width="5" height="5" fill="#fff" stroke="#333" stroke-width="1.1"/>
<rect x="104.5" y="177" width="5" height="5" fill="#fff" stroke="#333" stroke-width="1.1"/>
<rect x="104.5" y="181.5" width="5" height="5" fill="#fff" stroke="#333" stroke-width="1.1"/>
<circle cx="143" cy="177.5" r="5.5" fill="none" stroke="#111" stroke-width="1.8"/>
<path d="M143 169.5 V185.5 M135 177.5 H151" stroke="#111" stroke-width="1.8"/>
<circle cx="184" cy="177" r="8.5" fill="#e9c32a"/>
<path d="M184 177 L175.5 177 A8.5 8.5 0 0 1 181 169 Z" fill="#3f8fd8"/>
<path d="M184 177 L181 169 A8.5 8.5 0 0 1 192.5 176 Z" fill="#d83a2a"/>
<path d="M184 177 L175.5 177 A8.5 8.5 0 0 0 181 185 Z" fill="#3aa83a"/>
<ellipse cx="188.5" cy="173" rx="2.8" ry="4" fill="#222" transform="rotate(-30 188.5 173)"/>
<path d="M229.5 172 L234 177 L229.5 182" fill="none" stroke="#222" stroke-width="2"/>
<!-- filter -->
<path d="M8.5 197.5 L24.5 197.5 L18.5 205 L18.5 213.5 L16 213.5 L15.5 205 Z" fill="#eef1f3" stroke="#333" stroke-width="1.1" stroke-linejoin="round"/>
<rect x="8" y="196" width="17" height="3" rx="1.5" fill="#4a9cc8" stroke="#2a6a8a" stroke-width="0.8"/>
<!-- root icon -->
<path d="M9 222 L13.5 219 L18 221.5 L18 226 L21.5 228 L21.5 234.5 L16.5 238 L11.5 235 L11.5 230 L9 228.5 Z" fill="#f2cf2e" stroke="#5a4a08" stroke-width="0.9" stroke-linejoin="round"/>
<path d="M9 222 L13.5 224.5 L18 221.5 M13.5 224.5 V230 M11.5 230 L16.5 232.5 L21.5 228 M16.5 232.5 V238 M13.5 230 L18 226" fill="none" stroke="#5a4a08" stroke-width="0.7"/>
<rect x="4" y="224.5" width="6" height="13.5" rx="2.5" fill="#222"/>
<circle cx="7" cy="227.5" r="1.7" fill="#c84a3a"/><circle cx="7" cy="234.5" r="1.7" fill="#3aa83a"/>
<path d="M10.5 246.5 L14.5 250.5 L10.5 254.5 Z" fill="#444"/>
<path d="M10.5 291.5 L14.5 295.5 L10.5 299.5 Z" fill="#444"/>
<path d="M10.5 313.5 L14.5 317.5 L10.5 321.5 Z" fill="#444"/>
<path d="M10.5 447 L14.5 451 L10.5 455 Z" fill="#444"/>
<path d="M28.5 245.5 L28.5 244 Q28.5 243 29.5 243 L34 243 L35.5 245 L43.5 245 Q44.5 245 44.5 246 L44.5 258 Q44.5 259 43.5 259 L29.5 259 Q28.5 259 28.5 258 Z" fill="#f4f6f8" stroke="#333" stroke-width="1.1"/>
<path d="M29 247.5 L44 247.5" stroke="#999" stroke-width="0.8"/><circle cx="37" cy="254" r="4.5" fill="none" stroke="#333" stroke-width="1.2"/><path d="M37 251.5 V254 L39 255.5" stroke="#333" stroke-width="0.9" fill="none"/><path d="M31.5 253 L34 256.5 L36 253.5 Z" fill="#2a86c0"/><path d="M28.5 267.5 L28.5 266 Q28.5 265 29.5 265 L34 265 L35.5 267 L43.5 267 Q44.5 267 44.5 268 L44.5 280 Q44.5 281 43.5 281 L29.5 281 Q28.5 281 28.5 280 Z" fill="#f4f6f8" stroke="#333" stroke-width="1.1"/>
<path d="M29 269.5 L44 269.5" stroke="#999" stroke-width="0.8"/><circle cx="36.5" cy="276" r="4.8" fill="#fff" stroke="#333" stroke-width="1.3"/><path d="M34 278.5 L39.5 273" stroke="#d33" stroke-width="1.6"/><path d="M28.5 290.0 L28.5 288.5 Q28.5 287.5 29.5 287.5 L34 287.5 L35.5 289.5 L43.5 289.5 Q44.5 289.5 44.5 290.5 L44.5 302.5 Q44.5 303.5 43.5 303.5 L29.5 303.5 Q28.5 303.5 28.5 302.5 Z" fill="#f4f6f8" stroke="#333" stroke-width="1.1"/>
<path d="M29 292.0 L44 292.0" stroke="#999" stroke-width="0.8"/><text x="36.5" y="302" font-family="Liberation Serif" font-size="11" fill="#2a7ab0" text-anchor="middle">A</text><path d="M28.5 312.0 L28.5 310.5 Q28.5 309.5 29.5 309.5 L34 309.5 L35.5 311.5 L43.5 311.5 Q44.5 311.5 44.5 312.5 L44.5 324.5 Q44.5 325.5 43.5 325.5 L29.5 325.5 Q28.5 325.5 28.5 324.5 Z" fill="#f4f6f8" stroke="#333" stroke-width="1.1"/>
<path d="M29 314.0 L44 314.0" stroke="#999" stroke-width="0.8"/><circle cx="36.5" cy="320.5" r="4.5" fill="#1f6a90"/><path d="M34 319 L36.5 321 L39 319 M36.5 321 V324" stroke="#8cd" stroke-width="0.9" fill="none"/><circle cx="29.5" cy="331.5" r="2" fill="#fff" stroke="#555" stroke-width="1"/><circle cx="29.5" cy="337.5" r="2" fill="#9cd" stroke="#3a86b5" stroke-width="1"/><circle cx="29.5" cy="343.5" r="2" fill="#e9c32a" stroke="#b08a10" stroke-width="1"/>
<path d="M33 331.5 H44 M33 337.5 H44 M33 343.5 H36" stroke="#222" stroke-width="1.6"/>
<circle cx="41" cy="344.5" r="3.2" fill="#222"/><circle cx="41" cy="344.5" r="4.2" fill="none" stroke="#222" stroke-width="1" stroke-dasharray="1.3 1.2"/>
<path d="M30.5 356 L43 353 L43 367 L30.5 370 Z" fill="none" stroke="#444" stroke-width="1.1"/><path d="M36.8 352 V372" stroke="#444" stroke-width="1.1" stroke-dasharray="2 1.6"/>
<path d="M30.5 378 L43 375 L43 389 L30.5 392 Z" fill="none" stroke="#444" stroke-width="1.1"/><path d="M36.8 374 V394" stroke="#444" stroke-width="1.1" stroke-dasharray="2 1.6"/>
<path d="M30.5 400.5 L43 397.5 L43 411.5 L30.5 414.5 Z" fill="none" stroke="#444" stroke-width="1.1"/><path d="M36.8 396.5 V416.5" stroke="#444" stroke-width="1.1" stroke-dasharray="2 1.6"/>
<path d="M30.5 420 V436.5 H44" fill="none" stroke="#111" stroke-width="1.8"/>
<path d="M28 422.5 L30.5 418.5 L33 422.5 Z M42 434 L46 436.5 L42 439 Z" fill="#111"/>
<path d="M31.5 445.5 A7 7 0 1 1 30.2 454.5" fill="none" stroke="#1f6a90" stroke-width="5.6"/>
<path d="M31.5 445.5 A7 7 0 1 1 30.2 454.5" fill="none" stroke="#4aaee0" stroke-width="3.6"/>
<path d="M29.5 447 L42 453.5" stroke="#1a1a1a" stroke-width="1.3"/>
<path d="M28.5 466.5 V468.5 H41" fill="none" stroke="#1f6a90" stroke-width="1.4"/>
<rect x="28" y="468.5" width="5.5" height="12" rx="2" fill="#222"/><circle cx="30.7" cy="471.5" r="1.5" fill="#c33"/><circle cx="30.7" cy="477" r="1.5" fill="#3a3"/>
<path d="M35 480.5 H45.5" stroke="#1f6a90" stroke-width="1.4"/>
</svg>
<!-- bottom tabs -->
<div class="a" style="left:0;top:1016px;width:1941px;height:16px;background:#fbfbfb"></div>
<!-- status -->
<div class="a" style="left:0;top:1032px;width:1941px;height:1px;background:#a8a8a8"></div>
<div class="a" style="left:0;top:1033px;width:1941px;height:18px;background:#f7f7f7"></div>
<!-- bottom content -->
<div class="a" style="left:0;top:1016px;width:245px;height:1px;background:#d0d0d0"></div>
<div class="a" style="left:245px;top:1016px;width:1695px;height:1px;background:#b9b9b9"></div>
<div class="a" style="left:1940px;top:118px;width:1px;height:898px;background:#d0d0d0"></div>
<div class="a" style="left:2px;top:1016px;width:65px;height:16px;background:#c9c9c9;border-top:2px solid #6a6a6a"></div>
<svg class="a" style="left:0;top:0" width="320" height="1051">
<g stroke="#b4b4b4" stroke-width="1"><path d="M16.5 1018 V1032 M32.5 1018 V1032 M49.5 1018 V1032"/></g>
<g fill="#b0b0b0"><path d="M7 1020 V1029 M8 1024.5 L13 1020 L13 1029 Z"/><path d="M23 1024.5 L28 1020 L28 1029 Z"/><path d="M42 1024.5 L37 1020 L37 1029 Z"/><path d="M57 1024.5 L52 1020 L52 1029 Z"/></g>
<path d="M7.5 1020 V1029 M59.5 1020 V1029" stroke="#b0b0b0" stroke-width="1.3"/>
<path d="M12 998 L8 1002.5 L12 1007" fill="none" stroke="#333" stroke-width="1.3"/>
<path d="M233 998 L237 1002.5 L233 1007" fill="none" stroke="#333" stroke-width="1.3"/>
</svg>
<div class="a" style="left:18px;top:996px;width:180px;height:15px;background:#cdcdcd"></div>
<div class="a" style="left:125px;top:1017px;width:68px;height:15px;background:#d6d6d6;border:1px solid #a0a0a0;border-top:none"></div>
<div class="a" style="left:193px;top:1017px;width:110px;height:15px;background:#d6d6d6;border:1px solid #a0a0a0;border-top:none;border-left:none"></div>
<div class="t" style="left:80.5px;top:1018px;font-weight:bold;color:#111">Model</div>
<div class="t" style="left:135px;top:1018px;color:#222">3D Views</div>
<div class="t" style="left:203px;top:1018px;color:#222">Motion Study 1</div>
<div class="t" style="left:1px;top:1037.5px;color:#222;font-size:11.3px">SOLIDWORKS</div>
<div class="t" style="left:1611px;top:1037px;color:#222">Under Defined</div>
<div class="t" style="left:1706px;top:1037px;color:#222">Editing Sketch2</div>
<svg class="a" style="left:0;top:0" width="1941" height="1051">
<rect x="1813.5" y="1035.5" width="6" height="13" rx="2.5" fill="#222"/>
<circle cx="1816.5" cy="1038.5" r="1.8" fill="#c84a3a"/><circle cx="1816.5" cy="1045" r="1.8" fill="#4ab04a"/>
</svg>
</body></html>
